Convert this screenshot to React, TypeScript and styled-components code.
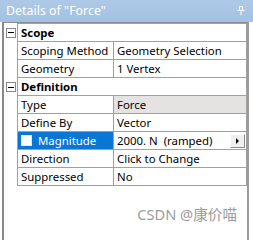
import React from "react";
import styled, { createGlobalStyle } from "styled-components";

const GlobalStyle = createGlobalStyle`
  html, body { margin: 0; padding: 0; background: #ffffff; }
  body {
    width: 253px;
    height: 240px;
    overflow: hidden;
    font-family: "Noto Sans", "Open Sans", sans-serif;
  }
  * { box-sizing: border-box; }
`;

const Frame = styled.div`
  width: 253px;
  height: 240px;
  display: flex;
  flex-direction: column;
  background: #fff;
`;

const TitleBar = styled.div`
  height: 22px;
  flex: none;
  display: flex;
  align-items: center;
  justify-content: space-between;
  padding: 0 8px 1px 6px;
  background: linear-gradient(#adc9e7, #a3c1e2);
  color: #ffffff;
  font-size: 12.3px;
  letter-spacing: 0.05px;
`;

const Panel = styled.div`
  flex: 1;
  width: 247px;
  margin-left: 2px;
  border-top: 1px solid #8c8c8c;
  border-left: 2px solid #8a8a8a;
  border-right: 2px solid #9a9a9a;
  display: flex;
  flex-direction: column;
`;

const Table = styled.div`
  display: flex;
  flex-direction: column;
`;

const Row = styled.div<{ $first?: boolean }>`
  display: grid;
  grid-template-columns: 13px 96px 1fr;
  height: ${(p) => (p.$first ? 19 : 18)}px;
  & > div:not(:first-child) {
    border-top: ${(p) => (p.$first ? "1px solid #a0a0a0" : "none")};
  }
`;

const Gutter = styled.div`
  display: flex;
  align-items: center;
  padding-left: 2px;
`;

const Expander = styled.div`
  width: 10px;
  height: 10px;
  border: 1px solid #8a8a8a;
  background: #fff;
  display: flex;
  align-items: center;
  justify-content: center;
  &::after {
    content: "";
    width: 6px;
    height: 1px;
    background: #000;
  }
`;

const Cell = styled.div<{ $bg?: string; $color?: string; $span?: boolean; $bold?: boolean; $right?: boolean }>`
  grid-column: ${(p) => (p.$span ? "2 / 4" : "auto")};
  display: flex;
  align-items: center;
  padding-left: 3px;
  border-left: 1px solid #a0a0a0;
  border-bottom: 1px solid #a0a0a0;
  border-right: ${(p) => (p.$right || p.$span ? "1px solid #a0a0a0" : "none")};
  background: ${(p) => p.$bg || "transparent"};
  color: ${(p) => p.$color || "#000"};
  font-size: 11.4px;
  font-weight: ${(p) => (p.$bold ? 700 : 400)};
  white-space: pre;
  overflow: hidden;
`;

const CheckBox = styled.span`
  width: 11px;
  height: 11px;
  background: #fff;
  border: 1px solid #e8e8e8;
  margin-right: 6px;
  flex: none;
`;

const ValueText = styled.span`
  flex: 1;
`;

const DropButton = styled.div`
  width: 15px;
  height: 14px;
  margin-right: 1px;
  background: #f0f0f0;
  border-top: 1px solid #ffffff;
  border-left: 1px solid #ffffff;
  border-right: 1px solid #8a8a8a;
  border-bottom: 1px solid #8a8a8a;
  display: flex;
  align-items: center;
  justify-content: center;
  &::after {
    content: "";
    width: 0;
    height: 0;
    border-top: 3px solid transparent;
    border-bottom: 3px solid transparent;
    border-left: 3px solid #000;
  }
`;

const Watermark = styled.div`
  margin-top: 17px;
  padding-right: 10px;
  text-align: right;
  font-family: "Noto Sans", "Noto Sans CJK SC", sans-serif;
  font-size: 14.6px;
  color: #9b9b9b;
`;

const Pin = () => (
  <svg width="8" height="9" viewBox="0 0 8 9" style={{ display: "block" }}>
    <path d="M2.5 0.5 H5.5 V4.5 H2.5 Z" fill="none" stroke="#fff" strokeWidth="1" />
    <path d="M0.5 4.5 H7.5" stroke="#fff" strokeWidth="1" />
    <path d="M4 4.5 V9" stroke="#fff" strokeWidth="1" />
  </svg>
);

type Item =
  | { kind: "header"; title: string }
  | { kind: "prop"; label: string; value: string; gray?: boolean; selected?: boolean };

const items: Item[] = [
  { kind: "header", title: "Scope" },
  { kind: "prop", label: "Scoping Method", value: "Geometry Selection" },
  { kind: "prop", label: "Geometry", value: "1 Vertex" },
  { kind: "header", title: "Definition" },
  { kind: "prop", label: "Type", value: "Force", gray: true },
  { kind: "prop", label: "Define By", value: "Vector" },
  { kind: "prop", label: "Magnitude", value: "2000. N  (ramped)", selected: true },
  { kind: "prop", label: "Direction", value: "Click to Change" },
  { kind: "prop", label: "Suppressed", value: "No" },
];

export default function App() {
  return (
    <>
      <GlobalStyle />
      <Frame>
        <TitleBar>
          <span>Details of "Force"</span>
          <Pin />
        </TitleBar>
        <Panel>
          <Table>
            {items.map((it, i) =>
              it.kind === "header" ? (
                <Row key={i} $first={i === 0}>
                  <Gutter>
                    <Expander />
                  </Gutter>
                  <Cell $span $bold>
                    {it.title}
                  </Cell>
                </Row>
              ) : (
                <Row key={i}>
                  <div />
                  <Cell $bg={it.selected ? "#0a76d6" : undefined} $color={it.selected ? "#fff" : undefined}>
                    {it.selected && <CheckBox />}
                    {it.label}
                  </Cell>
                  <Cell $right $bg={it.gray ? "#e4e3e1" : undefined}>
                    <ValueText>{it.value}</ValueText>
                    {it.selected && <DropButton />}
                  </Cell>
                </Row>
              )
            )}
          </Table>
          <Watermark>CSDN @康价喵</Watermark>
        </Panel>
      </Frame>
    </>
  );
}
